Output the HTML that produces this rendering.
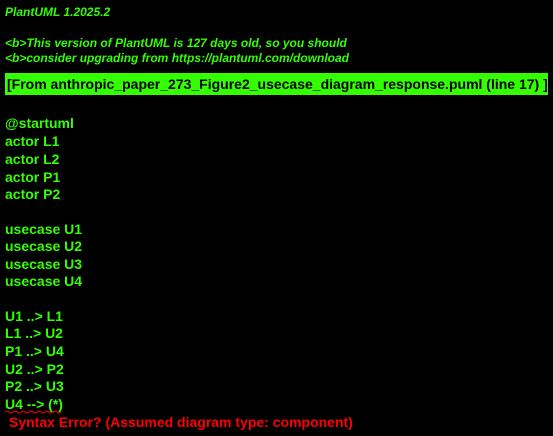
<!DOCTYPE html>
<html><head><meta charset="utf-8"><style>
html,body{margin:0;padding:0;background:#000;width:553px;height:436px;overflow:hidden}
.t{position:absolute;white-space:pre;font-family:"Liberation Sans",sans-serif;line-height:1}
.h{color:#33ff02;font-weight:bold;font-style:italic;font-size:12px;left:5px}
.c{color:#33ff02;font-weight:bold;font-size:14px;left:5px}
.box{position:absolute;left:5px;top:73px;width:543px;height:22px;background:#33ff02}
.bx{color:#000;font-weight:bold;font-size:14px;left:7px;top:77px}
.err{color:#ff0000;font-weight:bold;font-size:14px;left:9px}
</style></head><body>
<div class="t h" style="top:6px">PlantUML 1.2025.2</div>
<div class="t h" style="top:37px">&lt;b&gt;This version of PlantUML is 127 days old, so you should</div>
<div class="t h" style="top:52px">&lt;b&gt;consider upgrading from https://plantuml.com/download</div>
<div class="box"></div>
<div class="t bx">[From anthropic_paper_273_Figure2_usecase_diagram_response.puml (line 17) ]</div>
<div class="t c" style="top:116px">@startuml</div>
<div class="t c" style="top:134px">actor L1</div>
<div class="t c" style="top:152px">actor L2</div>
<div class="t c" style="top:170px">actor P1</div>
<div class="t c" style="top:187px">actor P2</div>
<div class="t c" style="top:222px">usecase U1</div>
<div class="t c" style="top:239px">usecase U2</div>
<div class="t c" style="top:257px">usecase U3</div>
<div class="t c" style="top:274px">usecase U4</div>
<div class="t c" style="top:309px">U1 ..&gt; L1</div>
<div class="t c" style="top:326px">L1 ..&gt; U2</div>
<div class="t c" style="top:344px">P1 ..&gt; U4</div>
<div class="t c" style="top:362px">U2 ..&gt; P2</div>
<div class="t c" style="top:379px">P2 ..&gt; U3</div>
<div class="t c" style="top:397px">U4 --&gt; (*)</div>
<svg style="position:absolute;left:5px;top:410px" width="58" height="5"><path d="M0 2 Q2 0 4 2 T8 2 T12 2 T16 2 T20 2 T24 2 T28 2 T32 2 T36 2 T40 2 T44 2 T48 2 T52 2 T56 2" fill="none" stroke="#ff0000" stroke-width="1"/></svg>
<div class="t err" style="top:415px">Syntax Error? (Assumed diagram type: component)</div>
</body></html>
